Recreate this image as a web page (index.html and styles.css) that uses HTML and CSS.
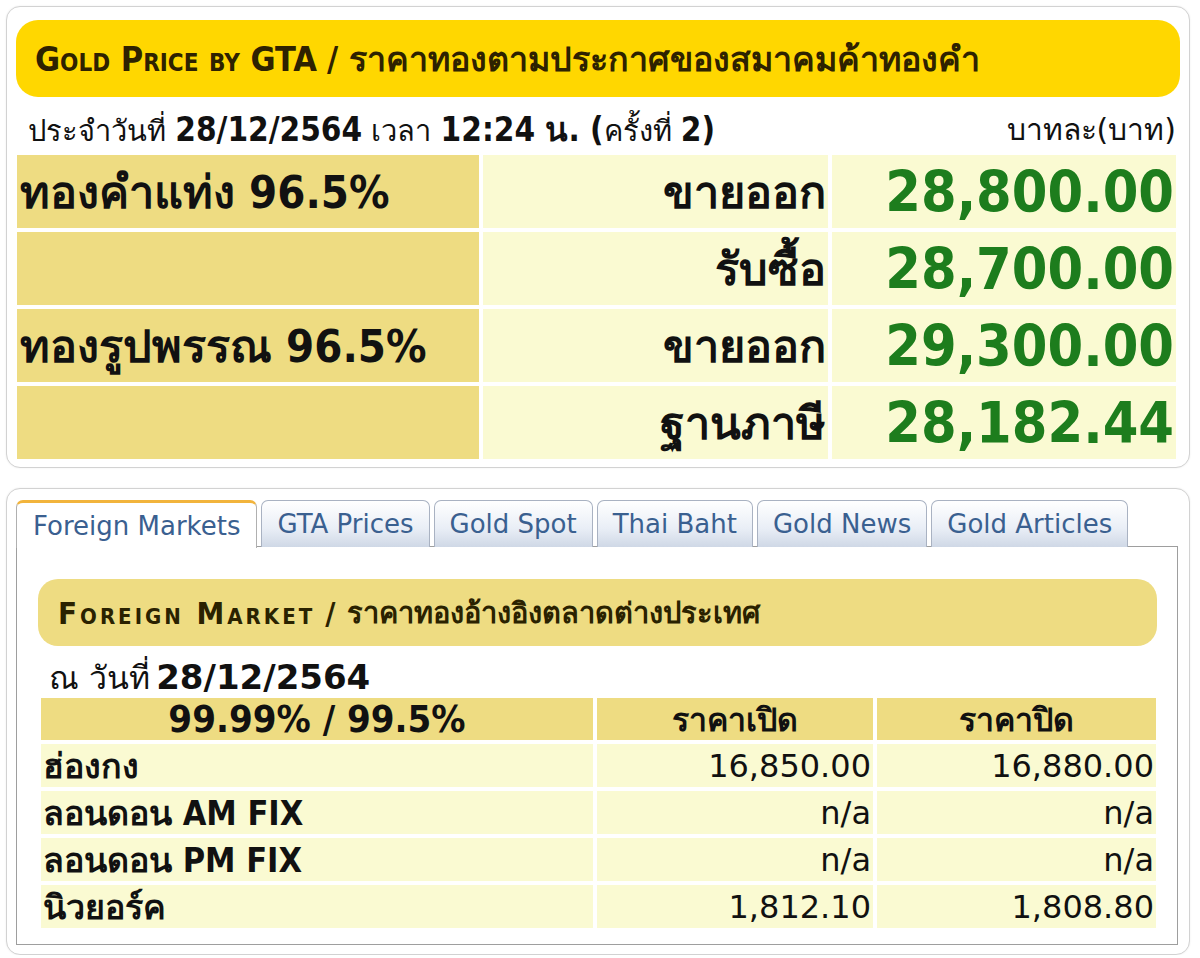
FILE: index.html
```html
<!DOCTYPE html>
<html lang="th">
<head>
<meta charset="utf-8">
<title>Gold Price by GTA</title>
<link rel="stylesheet" href="styles.css">
</head>
<body>
<div class="card gta-card">
  <div class="title-bar"><span class="sc">Gold Price by GTA</span> / ราคาทองตามประกาศของสมาคมค้าทองคำ</div>
  <div class="date-row">
    <span>ประจำวันที่ <b class="num">28/12/2564</b> เวลา <b class="num">12:24 น. (</b>ครั้งที่ <b class="num">2)</b></span>
    <span class="unit">บาทละ(บาท)</span>
  </div>
  <div class="price-grid">
    <div class="c1">ทองคำแท่ง 96.5%</div>
    <div class="c2">ขายออก</div>
    <div class="c3">28,800.00</div>
    <div class="c1"></div>
    <div class="c2">รับซื้อ</div>
    <div class="c3">28,700.00</div>
    <div class="c1">ทองรูปพรรณ 96.5%</div>
    <div class="c2">ขายออก</div>
    <div class="c3">29,300.00</div>
    <div class="c1"></div>
    <div class="c2">ฐานภาษี</div>
    <div class="c3">28,182.44</div>
  </div>
</div>

<div class="card tabs-card">
  <div class="tabs">
    <div class="tab active">Foreign Markets</div>
    <div class="tab">GTA Prices</div>
    <div class="tab">Gold Spot</div>
    <div class="tab">Thai Baht</div>
    <div class="tab">Gold News</div>
    <div class="tab">Gold Articles</div>
  </div>
  <div class="tab-body">
    <div class="sub-title"><span class="sc">Foreign Market</span> / <span class="th">ราคาทองอ้างอิงตลาดต่างประเทศ</span></div>
    <div class="as-of">ณ วันที่ <b>28/12/2564</b></div>
    <div class="fm-grid">
      <div class="h">99.99% / 99.5%</div>
      <div class="h th-h">ราคาเปิด</div>
      <div class="h th-h">ราคาปิด</div>
      <div class="l">ฮ่องกง</div>
      <div class="v">16,850.00</div>
      <div class="v">16,880.00</div>
      <div class="l">ลอนดอน AM FIX</div>
      <div class="v">n/a</div>
      <div class="v">n/a</div>
      <div class="l">ลอนดอน PM FIX</div>
      <div class="v">n/a</div>
      <div class="v">n/a</div>
      <div class="l">นิวยอร์ค</div>
      <div class="v">1,812.10</div>
      <div class="v">1,808.80</div>
    </div>
  </div>
</div>
</body>
</html>
```

FILE: styles.css
```css
html, body {
  margin: 0;
  padding: 0;
  background: #ffffff;
}
body {
  font-family: "DejaVu Sans", Tahoma, sans-serif;
  color: #111;
  padding: 6px 10px 0 6px;
}
.card {
  border: 1px solid #d2d2d2;
  border-radius: 14px;
  background: #fff;
  box-shadow: 0 0 2px rgba(0,0,0,0.08);
}
.gta-card {
  padding: 13px 9px 8px 9px;
  height: 462px;
  box-sizing: border-box;
}
.title-bar {
  background: #ffd700;
  border-radius: 22px;
  height: 77px;
  display: flex;
  align-items: center;
  padding-left: 19px;
  font-weight: bold;
  font-stretch: condensed;
  font-size: 34px;
  color: #2e2200;
  white-space: nowrap;
}
.title-bar .sc {
  font-variant: small-caps;
  margin-right: 10px;
}
.date-row {
  display: flex;
  justify-content: space-between;
  align-items: center;
  height: 58px;
  font-size: 29px;
  padding: 6px 4px 0 12px;
  box-sizing: border-box;
}
.date-row .num {
  font-size: 33px;
  font-stretch: condensed;
}
.date-row .unit {
  font-size: 30px;
}
.price-grid {
  display: grid;
  grid-template-columns: 462px 345px 344px;
  grid-auto-rows: 73px;
  gap: 4px;
  margin: 0 4px 0 1px;
}
.price-grid > div {
  display: flex;
  align-items: center;
  font-weight: bold;
  font-stretch: condensed;
  white-space: nowrap;
}
.c1 {
  background: #eedc82;
  font-size: 45px;
  padding-left: 3px;
}
.c2 {
  background: #fafad2;
  font-size: 45px;
  justify-content: flex-end;
  padding-right: 2px;
}
.c3 {
  background: #fafad2;
  font-size: 57px;
  color: #1d7d1d;
  justify-content: flex-end;
  padding-right: 2px;
}
.tabs-card {
  margin-top: 20px;
  padding: 11px 11px 9px 9px;
  height: 467px;
  box-sizing: border-box;
}
.tabs {
  display: flex;
  gap: 4px;
  height: 47px;
  position: relative;
  z-index: 1;
}
.tab {
  padding: 0 15px;
  display: flex;
  align-items: center;
  font-size: 26px;
  color: #3a6090;
  border: 1px solid #a9b2c2;
  border-bottom: none;
  border-radius: 7px 7px 0 0;
  background: linear-gradient(#ffffff, #e9eef6 60%, #cfd8e6);
  box-sizing: border-box;
  white-space: nowrap;
}
.tab.active {
  padding: 0 16px;
  background: #fff;
  border-top: 3px solid #f2b43c;
  border-color: #f2b43c #b0b0b0 #fff #b0b0b0;
  height: 48px;
}
.tab-body {
  border: 1px solid #9e9e9e;
  height: 399px;
  box-sizing: border-box;
  padding: 32px 20px 0 21px;
  margin-top: -1px;
}
.sub-title {
  background: #eedc82;
  border-radius: 20px;
  height: 67px;
  display: flex;
  align-items: center;
  padding-left: 20px;
  font-weight: bold;
  font-stretch: condensed;
  font-size: 31px;
  color: #2a2200;
  white-space: nowrap;
}
.sub-title .sc {
  font-variant: small-caps;
  letter-spacing: 3px;
  margin-right: 10px;
}
.sub-title .th {
  font-size: 29px;
  margin-left: 12px;
}
.as-of {
  height: 52px;
  display: flex;
  align-items: center;
  padding: 10px 0 0 11px;
  box-sizing: border-box;
  font-size: 32px;
}
.as-of b {
  font-size: 34px;
  margin-left: 6px;
}
.fm-grid {
  display: grid;
  grid-template-columns: 552px 276px 279px;
  grid-template-rows: 42px repeat(4, 43px);
  gap: 4px;
  margin: 0 2px 0 3px;
}
.fm-grid > div {
  display: flex;
  align-items: center;
  white-space: nowrap;
}
.fm-grid .h {
  background: #eedc82;
  justify-content: center;
  font-weight: bold;
  font-stretch: condensed;
  font-size: 38px;
}
.fm-grid .th-h {
  font-size: 32px;
}
.fm-grid .l {
  background: #fafad2;
  font-weight: bold;
  font-stretch: condensed;
  font-size: 34px;
  padding-left: 2px;
}
.fm-grid .v {
  background: #fafad2;
  justify-content: flex-end;
  font-size: 32px;
  padding-right: 2px;
}
```
